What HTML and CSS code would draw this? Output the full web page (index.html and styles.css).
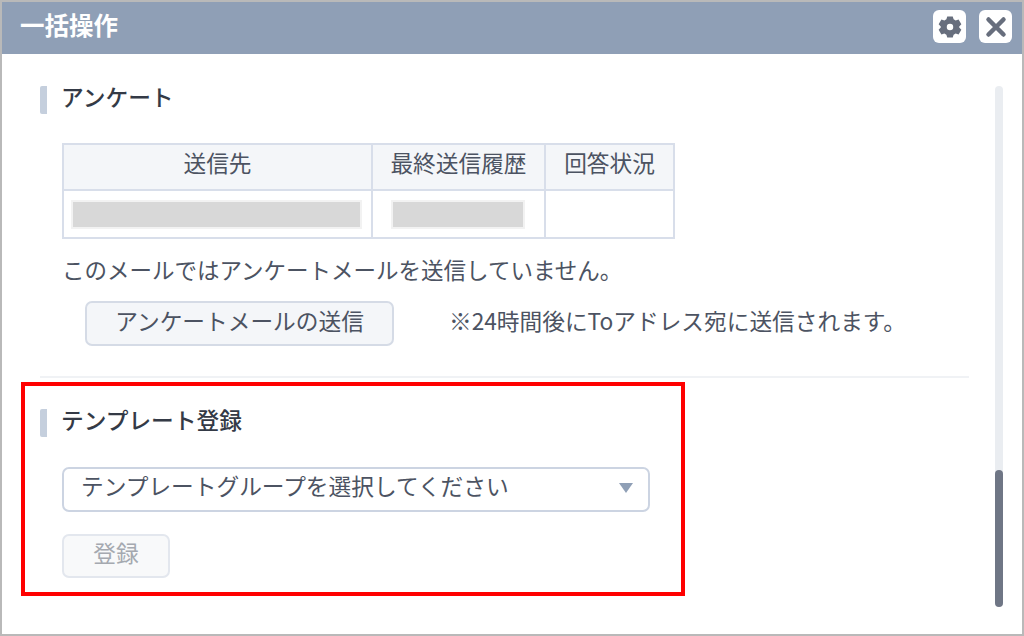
FILE: index.html
```html
<!DOCTYPE html>
<html lang="ja">
<head>
<meta charset="utf-8">
<title>一括操作</title>
<link rel="stylesheet" href="styles.css">
</head>
<body>
<div class="window">
  <header class="titlebar">
    <h1 class="titlebar-text">一括操作</h1>
    <div class="titlebar-actions">
      <button class="icon-btn" type="button" aria-label="設定">
        <svg width="24" height="24" viewBox="0 0 26 26"><path class="icon-fill" fill-rule="evenodd" d="M10 1.500h6l.9 3.200 2.200 1.200 3.200-.9 3 5-2.300 2.400v1.200l2.300 2.400-3 5-3.200-.9-2.200 1.200-.9 3.200h-6l-.9-3.200-2.200-1.200-3.200.9-3-5 2.300-2.400v-1.200L.7 10l3-5 3.200.9 2.200-1.200zM13 9.500a3.500 3.500 0 1 0 0 7 3.500 3.500 0 0 0 0-7z"/></svg>
      </button>
      <button class="icon-btn" type="button" aria-label="閉じる">
        <svg width="26" height="26" viewBox="0 0 26 26"><path class="icon-stroke" d="M5.500 5.500l15 15M20.500 5.500l-15 15"/></svg>
      </button>
    </div>
  </header>
  <main class="body">
    <div class="content">
      <section class="survey">
        <h2 class="section-title">アンケート</h2>
        <table class="status-table">
          <thead>
            <tr><th class="col-to">送信先</th><th class="col-last">最終送信履歴</th><th class="col-state">回答状況</th></tr>
          </thead>
          <tbody>
            <tr>
              <td><div class="redacted"></div></td>
              <td><div class="redacted"></div></td>
              <td></td>
            </tr>
          </tbody>
        </table>
        <p class="message">このメールではアンケートメールを送信していません。</p>
        <div class="send-row">
          <button class="btn" type="button">アンケートメールの送信</button>
          <span class="note">※24時間後にToアドレス宛に送信されます。</span>
        </div>
      </section>
      <section class="template">
        <h2 class="section-title">テンプレート登録</h2>
        <div class="select"><span>テンプレートグループを選択してください</span><i class="select-arrow"></i></div>
        <button class="btn btn-disabled" type="button">登録</button>
      </section>
    </div>
    <div class="scrollbar"><div class="scrollbar-thumb"></div></div>
  </main>
  <div class="highlight"></div>
</div>
</body>
</html>
```
FILE: styles.css
```css
* { box-sizing: border-box; }
html, body { margin: 0; height: 100%; overflow: hidden; background: #fff; }
body { font-family: "Noto Sans CJK JP", "Noto Sans", sans-serif; color: #4c5362; }

.window {
  position: relative;
  width: 1024px;
  height: 636px;
  border: 2px solid #b9b9b9;
  display: flex;
  flex-direction: column;
  background: #fff;
}

.titlebar {
  height: 52px;
  flex: none;
  background: #8f9fb6;
  display: flex;
  align-items: center;
  justify-content: space-between;
  padding: 0 10px 0 18px;
}
.titlebar-text { margin: 0; font-size: 24.5px; line-height: 46px; font-weight: 700; color: #fff; padding-bottom: 6px; }
.titlebar-actions { display: flex; gap: 13px; padding-bottom: 3px; }
.icon-btn {
  width: 33px;
  height: 33px;
  padding: 0;
  border: 0;
  border-radius: 6px;
  background: #fff;
  display: flex;
  align-items: center;
  justify-content: center;
}
.icon-fill { fill: #676e7d; }
.icon-stroke { fill: none; stroke: #676e7d; stroke-width: 4.500; stroke-linecap: round; }

.body { flex: 1; display: flex; min-height: 0; }
.content { width: 967px; padding: 32px 0 0 38px; flex: none; }

.section-title {
  margin: 0;
  height: 28px;
  padding-left: 14px;
  border-left: 7px solid #c5cfdd;
  border-radius: 2px;
  font-size: 22.700px;
  line-height: 22px;
  font-weight: 500;
  color: #343a46;
}

.survey { border-bottom: 2px solid #f0f2f5; height: 292px; }
.status-table {
  margin: 29px 0 0 22px;
  border-collapse: collapse;
  table-layout: fixed;
  width: 611px;
  font-size: 22.700px;
}
.status-table th, .status-table td { border: 2px solid #d8deea; padding: 0; }
.status-table th { height: 46px; background: #f4f6f9; font-weight: 400; line-height: 32px; padding-bottom: 9px; }
.status-table td { height: 48px; }
.col-to { width: 309px; }
.col-last { width: 173px; }
.col-state { width: 129px; }
.redacted { height: 29px; margin: 0 9px 0 7px; background: #d8d8d8; border: 2px solid #f2f2f2; }
.status-table td + td .redacted { margin: 0 19px 0 18px; }

.message { margin: 13px 0 0 22px; font-size: 22.500px; line-height: 34px; }
.send-row { display: flex; align-items: center; gap: 55px; margin: 15px 0 0 45px; }
.note { font-size: 22.700px; line-height: 32px; padding-bottom: 6px; }

.btn {
  font: inherit;
  font-size: 22.700px;
  line-height: 28px;
  height: 45px;
  padding: 0 0 5px;
  width: 309px;
  color: #4c5362;
  background: #f4f6f9;
  border: 2px solid #d5dbe6;
  border-radius: 7px;
}

.template { padding-top: 31px; }
.select {
  margin: 30px 0 0 22px;
  width: 588px;
  height: 45px;
  border: 2px solid #ccd4e2;
  border-radius: 7px;
  padding: 0 15px 7px 17px;
  display: flex;
  align-items: center;
  justify-content: space-between;
  font-size: 22.700px;
  line-height: 34px;
}
.select-arrow {
  width: 0;
  height: 0;
  margin-top: 3px;
  border-left: 7.500px solid transparent;
  border-right: 7.500px solid transparent;
  border-top: 10px solid #8f9fb6;
}
.btn-disabled {
  display: block;
  margin: 22px 0 0 22px;
  padding-bottom: 7px;
  width: 108px;
  height: 44px;
  color: #a5a9b0;
  background: #f8f9fa;
  border-color: #e3e7ee;
}

.scrollbar {
  position: relative;
  width: 8px;
  height: 521px;
  margin: 32px 0 0 26px;
  background: #eaedf1;
  border-radius: 4px;
}
.scrollbar-thumb { position: absolute; left: 0; right: 0; bottom: 0; height: 137px; background: #6f7685; border-radius: 4px; }

.highlight {
  position: absolute;
  left: 19px;
  top: 380px;
  width: 664px;
  height: 214px;
  border: 4px solid #ff0000;
  pointer-events: none;
}
```
